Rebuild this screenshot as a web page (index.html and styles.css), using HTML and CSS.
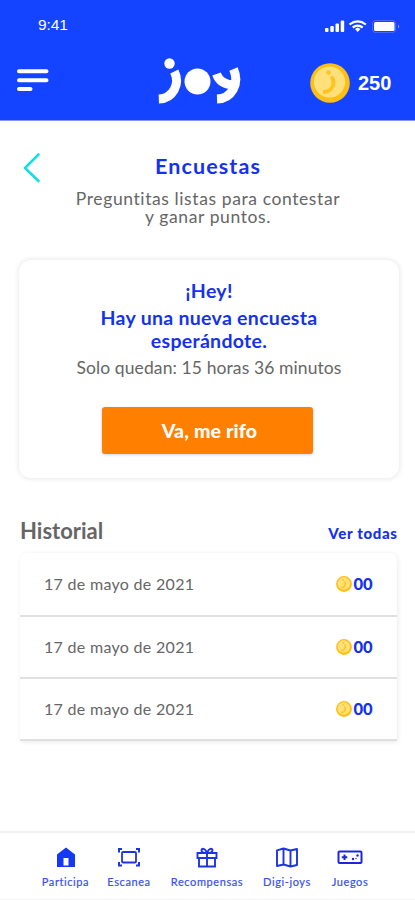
FILE: index.html
```html
<!DOCTYPE html>
<html lang="es">
<head>
<meta charset="utf-8">
<meta name="viewport" content="width=device-width, initial-scale=1">
<title>Joy - Encuestas</title>
<link rel="stylesheet" href="styles.css">
</head>
<body>
<svg width="0" height="0" class="defs" aria-hidden="true">
  <symbol id="coin" viewBox="0 0 40 40">
    <circle cx="20" cy="20" r="19.800" fill="#ffbf10"/>
    <circle cx="19.500" cy="19" r="15.600" fill="#ffe07a"/>
    <circle cx="18.500" cy="9.500" r="2.300" fill="#ffc420"/>
    <path d="M21.500 13.500c5 8 0 15.500-8.500 15.500" fill="none" stroke="#ffc420" stroke-width="3.800"/>
  </symbol>
</svg>
<div class="screen">
  <header class="header">
    <div class="status">
      <span class="clock">9:41</span>
      <svg class="signals" width="76" height="16" viewBox="0 0 76 16">
        <g fill="#fff">
          <rect x="0" y="10" width="3.500" height="4" rx="1"/><rect x="5.300" y="8" width="3.500" height="6" rx="1"/><rect x="10.500" y="5.500" width="3.500" height="8.500" rx="1"/><rect x="15.700" y="2.500" width="3.500" height="11.500" rx="1"/>
          <rect x="49" y="4" width="20.500" height="9" rx="1.500"/>
          <path d="M73 6.500q2.200 2 0 4z" opacity=".5"/>
          <path d="M30 11l2.700-1.500 2.700 1.500-2.700 3z"/>
        </g>
        <rect x="47.500" y="2.500" width="23" height="12" rx="3" fill="none" stroke="#fff" opacity=".2"/>
        <path d="M24.500 6.500q8.200-6.400 16.400 0M27.700 9.500q5-3.800 10 0" fill="none" stroke="#fff" stroke-width="2.200"/>
      </svg>
    </div>
    <div class="bar">
      <svg class="menu" width="32" height="24" viewBox="0 0 32 24"><path d="M2 2.300h27.500M2 11.200h27.500M2 20h11.500" stroke="#fff" stroke-width="4" stroke-linecap="round"/></svg>
      <svg class="logo" width="84" height="48" viewBox="158 57 84 48" role="img" aria-label="joy">
        <g fill="none" stroke="#fff" stroke-width="9">
          <path d="M158.800 99C173 98.500 180.500 84 174.300 71.500"/>
          <path d="M233.500 69C240 84 231.500 98.500 217 99"/>
          <path d="M216.500 74C219 81 224.500 84.500 233 85"/>
        </g>
        <circle cx="169.500" cy="63.500" r="5.200" fill="#fff"/>
        <circle cx="197.500" cy="81.500" r="13" fill="#fff"/>
      </svg>
      <div class="balance"><svg width="40" height="40"><use href="#coin"/></svg><span>250</span></div>
    </div>
  </header>

  <main>
    <section class="intro">
      <svg class="back" width="20" height="32" viewBox="0 0 20 32"><path d="M16.500 2.500L3 16 16.500 29" fill="none" stroke="#19dce4" stroke-width="2.600" stroke-linecap="round" stroke-linejoin="round"/></svg>
      <div class="intro-text">
        <h1>Encuestas</h1>
        <p>Preguntitas listas para contestar<br>y ganar puntos.</p>
      </div>
    </section>

    <section class="card">
      <h2 class="hey">¡Hey!</h2>
      <h2 class="news">Hay una nueva encuesta<br>esperándote.</h2>
      <p>Solo quedan: 15 horas 36 minutos</p>
      <button>Va, me rifo</button>
    </section>

    <section class="history">
      <div class="history-head"><h3>Historial</h3><a>Ver todas</a></div>
      <ul>
        <li><span class="date">17 de mayo de 2021</span><svg width="16" height="16"><use href="#coin"/></svg><b>00</b></li>
        <li><span class="date">17 de mayo de 2021</span><svg width="16" height="16"><use href="#coin"/></svg><b>00</b></li>
        <li><span class="date">17 de mayo de 2021</span><svg width="16" height="16"><use href="#coin"/></svg><b>00</b></li>
      </ul>
    </section>
  </main>

  <nav class="tabs">
    <a class="t1"><svg width="26" height="24" viewBox="0 0 26 24"><path d="M4 8.500L13 1.500 22 8.500v12.500H4z" fill="#1538f5"/><path d="M10.500 12h5v7.500h-5z" fill="#fff"/></svg><span>Participa</span></a>
    <a class="t2"><svg width="26" height="24" viewBox="0 0 26 24" fill="none" stroke="#1c35e0"><rect x="6" y="6" width="14" height="10.500" rx="1" stroke-width="1.800"/><path d="M3 6.500V3H6M20 3h3v3.500M23 16V19.500H20M6 19.500H3V16" stroke-width="2"/></svg><span>Escanea</span></a>
    <a class="t3"><svg width="26" height="24" viewBox="0 0 26 24" fill="none" stroke="#1c35e0" stroke-width="1.900"><path d="M3.500 7h19v5h-19zM5 12h16v8.500H5zM13 7V20.500M13 7C10 7 7.500 6 7.500 4.200S11 1.500 13 7c2-5.500 5.500-4.600 5.500-2.800S16 7 13 7"/></svg><span>Recompensas</span></a>
    <a class="t4"><svg width="26" height="24" viewBox="0 0 26 24" fill="none" stroke="#1c35e0" stroke-width="1.900"><path d="M3 4.300L9.500 2.500l7 2L23 3v16l-6.500 1.500-7-2L3 20zM9.500 2.500v16M16.500 4.500v16" stroke-linejoin="round"/></svg><span>Digi-joys</span></a>
    <a class="t5"><svg width="26" height="24" viewBox="0 0 26 24"><rect x="1.500" y="5.500" width="23" height="11.500" rx="1" fill="none" stroke="#1c28d8" stroke-width="2"/><path d="M7.500 8.500V14M4.800 11.200h5.500" stroke="#1c28d8" stroke-width="2"/><g fill="#1c28d8"><circle cx="16" cy="13" r="1.200"/><circle cx="20.500" cy="9.500" r="1.200"/><circle cx="19" cy="12.500" r=".7"/></g></svg><span>Juegos</span></a>
  </nav>
</div>
</body>
</html>
```
FILE: styles.css
```css
* { box-sizing: border-box; margin: 0; padding: 0; }
body { background: #fff; font-family: Lato, "Noto Sans", sans-serif; color: #666; }
svg { display: block; flex: none; }
.defs { position: absolute; }
.screen { width: 415px; height: 900px; display: flex; flex-direction: column; overflow: hidden; }

.header { height: 121px; flex: none; background: #1444ff; border-bottom: 1px solid #8798fb; color: #fff; font-family: "Liberation Sans", sans-serif; }
.status { height: 50px; display: flex; justify-content: space-between; align-items: center; padding: 0 14px 0 38px; }
.clock { font-size: 15.5px; letter-spacing: -.1px; }
.signals { margin-top: 2px; }
.bar { height: 66px; display: grid; grid-template-columns: 141px 84px 1fr; align-items: center; padding-left: 17px; }
.menu { margin-top: -4px; }
.logo { margin-top: -4px; }
.balance { display: flex; align-items: center; gap: 8px; padding-left: 68px; font-size: 20px; font-weight: 700; }

main { flex: 1; }
.intro { display: grid; grid-template-columns: 20px 332px; height: 139px; padding: 31px 0 0 22px; }
.intro-text { text-align: center; }
h1 { font-size: 21.5px; line-height: 28px; font-weight: 700; color: #1432ee; letter-spacing: 1.1px; }
.intro p { margin-top: 10px; font-size: 17.5px; line-height: 18px; letter-spacing: .6px; }

.card { width: 380px; height: 218px; margin-left: 19px; border-radius: 12px; box-shadow: 0 0 5px 1px rgba(0,0,0,.09); text-align: center; padding-top: 17px; }
h2 { font-size: 19.5px; color: #1432ee; font-weight: 700; letter-spacing: .3px; }
.hey { line-height: 27px; }
.news { line-height: 22.500px; margin-top: 3px; }
.card p { font-size: 17.5px; line-height: 22px; margin-top: 5px; letter-spacing: .1px; }
button { display: block; width: 211px; height: 47px; margin: 28px 0 0 83px; border: 0; border-radius: 3px; background: #ff8000; color: #fff; font: 900 19.5px/47px Lato, sans-serif; padding-left: 4px; letter-spacing: .2px; box-shadow: 0 1px 3px rgba(70,50,120,.22); }

.history { padding: 39px 18px 0 20px; }
.history-head { display: flex; justify-content: space-between; align-items: baseline; height: 36px; line-height: 28px; }
h3 { font-size: 22px; font-weight: 700; }
.history-head a { font-size: 15px; font-weight: 900; color: #1432ee; letter-spacing: .65px; margin-right: -.6px; }
ul { list-style: none; width: 377px; border-radius: 7px 7px 3px 3px; box-shadow: 1px 1px 5px rgba(0,0,0,.09); }
li { height: 62px; display: flex; align-items: center; padding: 0 22px 0 24px; border-bottom: 2px solid #e0e0e0; }
li:first-child { height: 64px; }
.date { flex: 1; font-size: 16px; letter-spacing: .3px; padding-bottom: 2px; }
li svg { margin: 0 1.500px 0 0; }
li b { width: 21.500px; font-size: 16.500px; font-weight: 900; color: #1432ee; }

.tabs { height: 69px; flex: none; display: flex; padding: 13px 0 0 34px; border-top: 2px solid #f1f1f1; border-bottom: 1px solid #f3f3f3; }
.tabs a { display: flex; flex-direction: column; align-items: center; font-size: 11px; line-height: 14px; letter-spacing: .6px; color: #3950ee; white-space: nowrap; }
.tabs span { margin-top: 5px; -webkit-text-stroke: .2px #3950ee; }
.t1 { width: 63px; }
.t2 { width: 64px; }
.t3 { width: 92px; }
.t4 { width: 68px; }
.t5 { width: 58px; }
```
